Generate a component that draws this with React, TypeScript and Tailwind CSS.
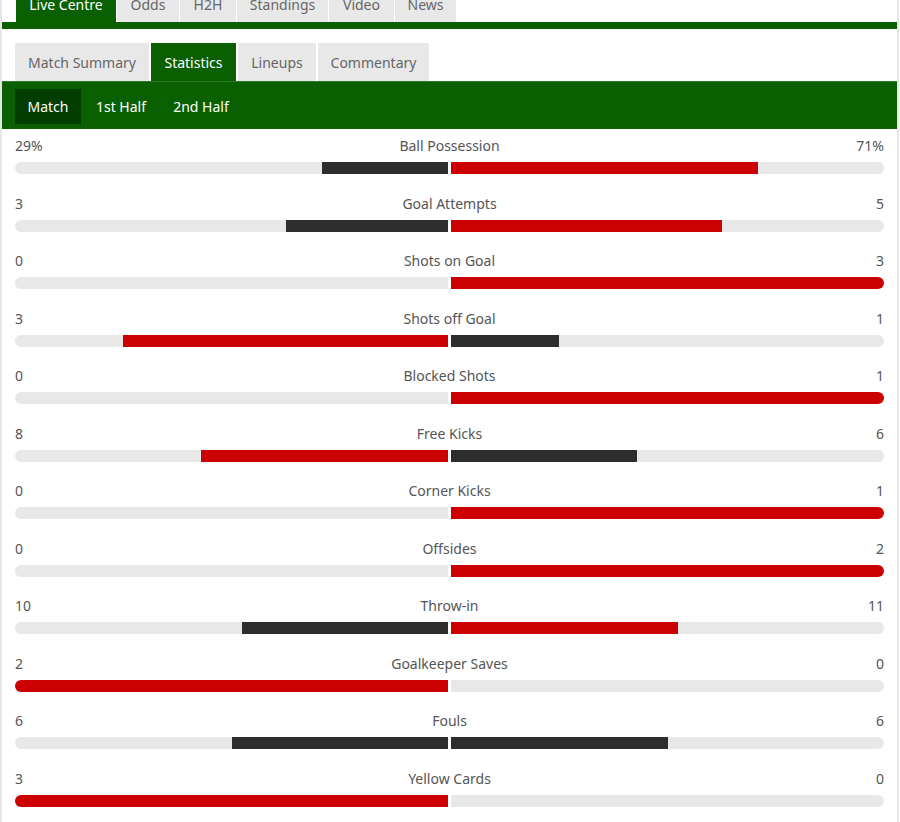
import React from "react";

type Stat = { name: string; home: string; away: string; h: number; a: number };

const stats: Stat[] = [
  { name: "Ball Possession", home: "29%", away: "71%", h: 29, a: 71 },
  { name: "Goal Attempts", home: "3", away: "5", h: 3, a: 5 },
  { name: "Shots on Goal", home: "0", away: "3", h: 0, a: 3 },
  { name: "Shots off Goal", home: "3", away: "1", h: 3, a: 1 },
  { name: "Blocked Shots", home: "0", away: "1", h: 0, a: 1 },
  { name: "Free Kicks", home: "8", away: "6", h: 8, a: 6 },
  { name: "Corner Kicks", home: "0", away: "1", h: 0, a: 1 },
  { name: "Offsides", home: "0", away: "2", h: 0, a: 2 },
  { name: "Throw-in", home: "10", away: "11", h: 10, a: 11 },
  { name: "Goalkeeper Saves", home: "2", away: "0", h: 2, a: 0 },
  { name: "Fouls", home: "6", away: "6", h: 6, a: 6 },
  { name: "Yellow Cards", home: "3", away: "0", h: 3, a: 0 },
];

const topTabs = [
  { label: "Live Centre", w: "w-[100px]", active: true },
  { label: "Odds", w: "w-[62px]" },
  { label: "H2H", w: "w-[56px]" },
  { label: "Standings", w: "w-[91px]" },
  { label: "Video", w: "w-[65px]" },
  { label: "News", w: "w-[61px]" },
];

const subTabs = [
  { label: "Match Summary", w: "w-[134px]" },
  { label: "Statistics", w: "w-[85px]", active: true },
  { label: "Lineups", w: "w-[78px]" },
  { label: "Commentary", w: "w-[111px]" },
];

function StatRow({ s }: { s: Stat }) {
  const total = s.h + s.a;
  const hp = total ? (s.h / total) * 100 : 0;
  const ap = total ? (s.a / total) * 100 : 0;
  const hColor = s.h > s.a ? "bg-[#cc0000]" : "bg-[#2d2d2d]";
  const aColor = s.a > s.h ? "bg-[#cc0000]" : "bg-[#2d2d2d]";
  return (
    <div className="h-[57.5px]">
      <div className="flex h-[20px] items-center justify-between text-[14px] leading-[20px] text-[#555]">
        <span className="w-[80px]">{s.home}</span>
        <span>{s.name}</span>
        <span className="w-[80px] text-right">{s.away}</span>
      </div>
      <div className="mt-[6px] flex h-[12px] gap-[3px]">
        <div className="flex flex-1 justify-end overflow-hidden rounded-l-full bg-[#e8e8e8]">
          <div className={hColor} style={{ width: `${hp}%` }} />
        </div>
        <div className="flex flex-1 justify-start overflow-hidden rounded-r-full bg-[#e8e8e8]">
          <div className={aColor} style={{ width: `${ap}%` }} />
        </div>
      </div>
    </div>
  );
}

export default function App() {
  return (
    <div
      className="h-[822px] w-[899px] overflow-hidden border-x-2 border-[#e6e6e6] bg-white"
      style={{ fontFamily: "'Noto Sans', 'Liberation Sans', sans-serif" }}
    >
      {/* top tabs */}
      <div className="mt-[-14px] flex gap-px pl-[14px]">
        {topTabs.map((t) => (
          <div
            key={t.label}
            className={`flex h-[36px] items-center justify-center text-[14px] ${t.w} ${
              t.active ? "bg-[#0a5f00] text-white" : "bg-[#e8e8e8] text-[#666]"
            }`}
          >
            {t.label}
          </div>
        ))}
      </div>
      <div className="h-[7px] bg-[#0a5f00]" />

      {/* sub tabs */}
      <div className="mt-[14px] flex gap-[2px] pl-[13px]">
        {subTabs.map((t) => (
          <div
            key={t.label}
            className={`flex h-[38px] items-center justify-center text-[14px] ${t.w} ${
              t.active ? "bg-[#0a5f00] text-white" : "bg-[#e8e8e8] text-[#666]"
            }`}
          >
            {t.label}
          </div>
        ))}
      </div>

      {/* period bar */}
      <div className="flex h-[48px] items-center gap-[2px] border-t border-[#2f7a25] bg-[#0a5f00] pb-[1px] pl-[13px] pt-[2px]">
        <div className="flex h-[35px] w-[66px] items-center justify-center bg-[#043d00] text-[14px] text-white">
          Match
        </div>
        <div className="flex h-[35px] w-[76px] items-center justify-center text-[14px] text-white">
          1st Half
        </div>
        <div className="flex h-[35px] w-[80px] items-center justify-center text-[14px] text-white">
          2nd Half
        </div>
      </div>

      {/* stats */}
      <div className="px-[13px] pt-[7px]">
        {stats.map((s) => (
          <StatRow key={s.name} s={s} />
        ))}
      </div>
    </div>
  );
}
